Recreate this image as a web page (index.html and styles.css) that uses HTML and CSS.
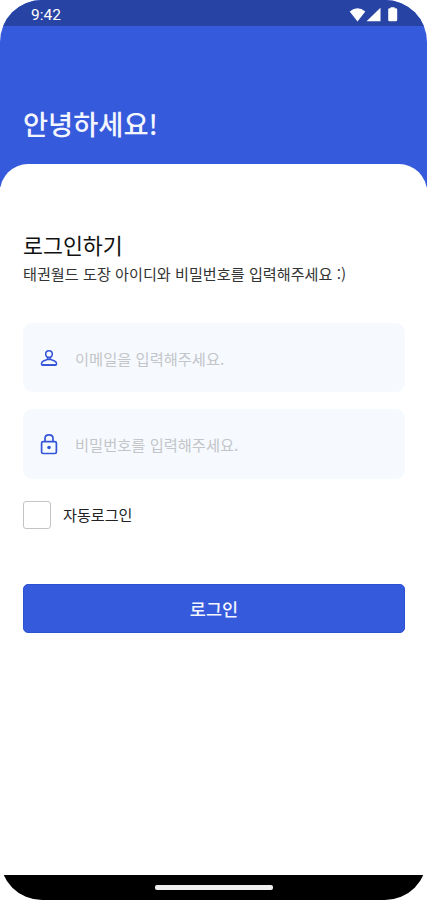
FILE: index.html
```html
<!DOCTYPE html>
<html lang="ko">
<head>
<meta charset="utf-8">
<title>로그인</title>
<link rel="stylesheet" href="styles.css">
</head>
<body>
<div class="phone">
  <header class="hero">
    <div class="status">
      <span class="time">9:42</span>
      <svg class="signals" width="50" height="18" viewBox="0 0 50 18" fill="#fff">
        <path d="M.7 4.500Q8.500-2 16.300 4.500L8.500 14.600Z"/>
        <path d="M31.500.7V14.300H17.500Z"/>
        <path d="M41.600.3h4v1h1.200q1.400 0 1.400 1.200v10.400q0 1.400-1.400 1.400h-6.200q-1.400 0-1.400-1.400V2.500q0-1.200 1.200-1.200h1.200z"/>
      </svg>
    </div>
    <h1 class="greeting">안녕하세요!</h1>
  </header>
  <main class="sheet">
    <h2 class="title">로그인하기</h2>
    <p class="subtitle">태권월드 도장 아이디와 비밀번호를 입력해주세요 :)</p>
    <div class="field">
      <svg class="icon" width="18" height="22" viewBox="0 0 18 22" fill="none" stroke="#3454d8" stroke-width="1.5" stroke-linejoin="round">
        <circle cx="9" cy="7" r="3.300"/>
        <path d="M7 10L8 11.200Q8 12.400 6 13L3.400 14Q1.400 15 1.400 16.800Q1.400 18.300 3 18.300H15Q16.600 18.300 16.600 16.800Q16.600 15 14.600 14L12 13Q10 12.400 10 11.200L11 10M7.500 12.600H10.500"/>
        <path d="M2 18H16" stroke-width="1.800"/>
      </svg>
      <span class="placeholder">이메일을 입력해주세요.</span>
    </div>
    <div class="field">
      <svg class="icon" width="18" height="22" viewBox="0 0 18 22" fill="none" stroke="#3454d8" stroke-width="1.700">
        <rect x="1.600" y="8.700" width="14.800" height="11.800" rx="1.600"/>
        <path d="M5 8.500V5.500Q5 1.900 9 1.900T13 5.500V8.500"/>
        <circle cx="9" cy="14.500" r="1.800" fill="#3454d8" stroke="none"/>
      </svg>
      <span class="placeholder">비밀번호를 입력해주세요.</span>
    </div>
    <label class="remember"><span class="checkbox"></span><span class="remember-text">자동로그인</span></label>
    <button class="submit">로그인</button>
  </main>
  <footer class="navbar"><span class="handle"></span></footer>
</div>
</body>
</html>
```
FILE: styles.css
```css
* { box-sizing: border-box; }
body { margin: 0; background: #fff; font-family: "Noto Sans CJK KR", sans-serif; }
.phone { height: 900px; display: flex; flex-direction: column; border-radius: 42px; overflow: hidden; background: #fff; }
.hero { height: 187px; flex: none; background: #355adb; }
.status { height: 26px; padding: 0 28px 0 31px; display: flex; justify-content: space-between; background: #2743a3; color: #fff; }
.time { font: 15.5px/31px Roboto, sans-serif; }
.signals { margin-top: 7px; }
.greeting { margin: 77px 0 0 23px; font-size: 27.3px; line-height: 40px; font-weight: 500; color: #f3f5ff; }
.sheet { flex: 1; margin-top: -23px; padding: 65px 22px 0 23px; border-radius: 28px 28px 0 0; background: #fff; }
.title { margin: 0; font-size: 21.7px; line-height: 31px; font-weight: 400; color: #111; }
.subtitle { margin: 0 0 37px; font-size: 15.150px; line-height: 26px; white-space: nowrap; color: #333; }
.field { height: 69px; margin-bottom: 17px; padding-left: 17px; display: flex; align-items: center; border-radius: 9px; background: #f6faff; }
.field + .field { height: 70px; margin-bottom: 22px; }
.icon { margin-right: 17px; }
.placeholder { font-size: 15.3px; line-height: 24px; color: #c3c5c8; }
.field + .field .placeholder { margin-top: -1px; }
.remember { height: 28px; display: flex; align-items: center; gap: 12px; font-size: 15.1px; line-height: 22px; color: #222; }
.remember-text { margin-top: -2px; }
.checkbox { width: 28px; height: 28px; border: 1.500px solid #c4c4c4; border-radius: 3px; }
.submit { width: 100%; height: 49px; margin-top: 55px; padding: 0; border: 1px solid #2b51d4; border-radius: 5px; background: #355adb; color: #f3f5ff; font: 500 17.5px/47px "Noto Sans CJK KR", sans-serif; }
.navbar { height: 25px; flex: none; display: flex; align-items: center; justify-content: center; background: #000; }
.handle { width: 118px; height: 5px; border-radius: 2px; background: #eee; }
```
